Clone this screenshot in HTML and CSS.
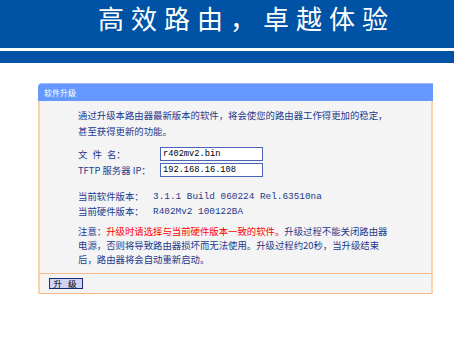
FILE: index.html
```html
<!DOCTYPE html>
<html lang="zh-CN">
<head>
  <meta charset="UTF-8">
  <title>软件升级</title>
  <link rel="stylesheet" href="styles.css">
</head>
<body>
  <div class="banner">
    <h1>高效路由，卓越体验</h1>
  </div>
  <div class="stripe"></div>

  <div class="page">
    <div class="panel">
      <div class="panel-title">软件升级</div>
      <div class="panel-body">
        <p class="intro">通过升级本路由器最新版本的软件，将会使您的路由器工作得更加的稳定，<br>甚至获得更新的功能。</p>

        <div class="form-grid">
          <label for="file" class="spaced">文 件 名：</label>
          <input id="file" class="field" type="text" value="r402mv2.bin">
          <label for="tftp">TFTP 服务器 IP：</label>
          <input id="tftp" class="field" type="text" value="192.168.16.108">
        </div>

        <div class="versions">
          <span>当前软件版本：</span><span class="mono">3.1.1 Build 060224 Rel.63510na</span>
          <span>当前硬件版本：</span><span class="mono">R402Mv2 100122BA</span>
        </div>

        <p class="note">注意：<span class="warn">升级时请选择与当前硬件版本一致的软件。</span>升级过程不能关闭路由器<br>电源，否则将导致路由器损坏而无法使用。升级过程约20秒，当升级结束<br>后，路由器将会自动重新启动。</p>
      </div>
      <div class="panel-foot">
        <button class="btn" type="button">升 级</button>
      </div>
    </div>
  </div>
</body>
</html>
```

FILE: styles.css
```css
body {
  margin: 0;
  background: #fff;
  font-family: "Noto Sans CJK SC", "Noto Sans", sans-serif;
  color: #1f3a8c;
}
.banner {
  height: 48px;
  background-color: #0053a4;
}
.banner h1 {
  margin: 0;
  padding-left: 39px;
  font-size: 26px;
  font-weight: 400;
  line-height: 36px;
  letter-spacing: 7px;
  text-align: center;
  color: #fff;
}
.stripe {
  height: 12px;
  margin-top: 3px;
  background-color: #0053a4;
}
.page {
  padding: 20px 21px 0 38px;
}
.panel {
  width: 395px;
}
.panel-title {
  height: 17px;
  padding-left: 6px;
  border-top: 1px solid #9dbcff;
  border-radius: 4px 0 0 0;
  background-color: #6699ff;
  color: #fff;
  font-size: 8px;
  line-height: 17px;
}
.panel-body {
  padding: 6px 10px 7px 38px;
  border-left: 2px solid #fcd3a8;
  border-right: 2px solid #fcd3a8;
  background-color: #f4f4f4;
  font-size: 9.4px;
}
.intro {
  margin: 0;
  line-height: 16px;
}
.form-grid {
  display: grid;
  grid-template-columns: 82px 103px;
  row-gap: 2px;
  margin-top: 8px;
  align-items: center;
}
.form-grid label {
  line-height: 14px;
}
.form-grid .spaced {
  word-spacing: 3px;
}
.field {
  box-sizing: border-box;
  width: 103px;
  height: 14px;
  margin: 0;
  padding: 0 2px;
  border: 1px solid #4b63b8;
  background: #fff;
  color: #000;
  font-family: "Liberation Mono", monospace;
  font-size: 8.7px;
}
.versions {
  display: grid;
  grid-template-columns: 75px auto;
  margin-top: 12px;
  line-height: 15px;
}
.mono {
  font-family: "Liberation Mono", monospace;
  font-size: 9.4px;
}
.note {
  margin: 5px 0 0;
  line-height: 14px;
}
.warn {
  color: #ff0000;
}
.panel-foot {
  padding: 4px 0 4px 9px;
  border: 2px solid #fcd3a8;
  border-top-width: 1px;
  border-bottom-width: 1px;
  border-color: #f7b985 #fcd3a8 #f7b985;
  background-color: #f4f4f4;
}
.btn {
  display: block;
  box-sizing: border-box;
  width: 34px;
  height: 11px;
  padding: 0;
  border: 1px solid #1b2a6b;
  background-color: #d2d2f6;
  color: #000;
  font-family: "Noto Sans CJK SC", sans-serif;
  font-size: 8.5px;
  line-height: 9px;
  letter-spacing: 2px;
}
```
